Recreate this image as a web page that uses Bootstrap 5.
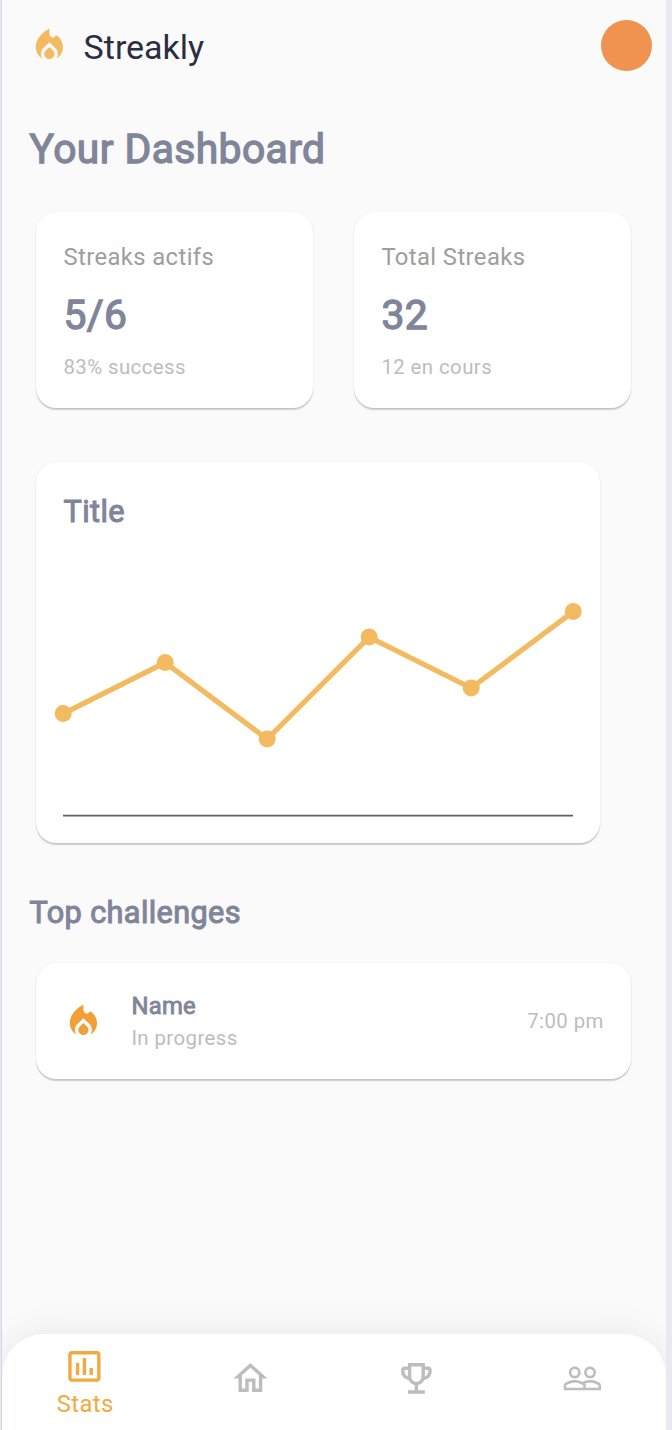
<!DOCTYPE html>
<html lang="en">
<head>
<meta charset="utf-8">
<meta name="viewport" content="width=device-width, initial-scale=1">
<title>Streakly</title>
<link href="https://cdn.jsdelivr.net/npm/bootstrap@5.3.0/dist/css/bootstrap.min.css" rel="stylesheet">
<style>
  body { background: #e7eaf3; font-family: Roboto, "Liberation Sans", sans-serif; overflow: hidden; }
  .phone { width: 665px; height: 1430px; margin-left: 1px; background: #fafafa; border-left: 1px solid #d2d4de; }
  .appbar { height: 91px; padding: 0 14.5px 0 27.4px; }
  .brand { font-size: 34px; line-height: 40px; color: #2b2d42; margin-left: 13.4px; padding-top: 3px; }
  .avatar { width: 51px; height: 51px; background: #f09351; }
  .ic { width: 40.8px; height: 40.8px; fill: currentColor; display: block; flex: none; }
  .strong-ink { color: #80859a; font-weight: 400; margin: 0; }
  .h-page { font-size: 40.8px; line-height: 48px; letter-spacing: .4px; -webkit-text-stroke: 1.3px #80859a; padding: 33.5px 0 0 27.6px; }
  .h-sect { font-size: 30.6px; line-height: 36px; letter-spacing: .4px; -webkit-text-stroke: 1.05px #80859a; }
  .h-name { font-size: 23.8px; line-height: 28px; letter-spacing: .3px; -webkit-text-stroke: .87px #80859a; }
  .tile { background: #fff; border: 0; border-radius: 20.4px; box-shadow: 0 1.2px 1.3px rgba(0,0,0,.17), 0 .9px 1.6px rgba(0,0,0,.07); }
  .stat { width: 277.4px; height: 196px; padding: 28px 27.4px 0; }
  .t-label { font-size: 23.8px; line-height: 34px; letter-spacing: .41px; color: #9e9e9e; }
  .t-sub { font-size: 20.4px; line-height: 27px; letter-spacing: .42px; color: #bdbdbd; }
  .stats { gap: 40.6px; margin: 39.5px 0 0 34px; }
  .num { font-size: 40.8px; line-height: 48px; letter-spacing: .4px; -webkit-text-stroke: 1.3px #80859a; margin: 17px 0 15px; }
  .chart-tile { width: 564.4px; height: 381px; margin: 54px 0 0 34px; padding-top: 32px; }
  .chart-tile .h-sect { padding-left: 27.6px; }
  .plot { display: block; width: 564px; height: 290px; }
  .top-title { padding: 52px 0 0 27.6px; }
  .challenge { height: 116px; margin: 32px 35px 0 34px; padding: 0 27.2px 0 27.4px; }
  .bottom-nav { height: 96.5px; background: #fff; border-radius: 42px 42px 0 0; color: #bdbdbd; box-shadow: 0 0 34px rgba(0,0,0,.08); clip-path: inset(-50px 0 0 0); padding-right: 1px; }
  .bottom-nav a { color: inherit; text-decoration: none; padding-top: 24.4px; }
  .bottom-nav a.active { color: #f4a940; padding-top: 12.4px; }
  .bottom-nav span { font-size: 23.8px; line-height: 34px; letter-spacing: .43px; padding-left: .6px; }
</style>
</head>
<body>
<div class="phone d-flex flex-column">
  <header class="appbar d-flex align-items-center">
    <svg class="ic" style="color:#f4ba60" viewBox="0 0 24 24"><path d="M12 12.9l-2.13 2.09C9.31 15.55 9 16.28 9 17.06 9 18.68 10.35 20 12 20s3-1.32 3-2.94c0-.78-.31-1.52-.87-2.07L12 12.9z"/><path d="M16 6l-.44.55C14.38 8.02 12 7.19 12 5.3V2S4 6 4 13c0 2.92 1.56 5.47 3.89 6.86-.56-.79-.89-1.76-.89-2.8 0-1.32.52-2.56 1.47-3.5L12 10.1l3.53 3.47c.95.93 1.47 2.17 1.47 3.5 0 1.02-.31 1.96-.85 2.75 1.89-1.15 3.29-3.06 3.71-5.3.66-3.55-1.07-6.9-3.86-8.52z"/></svg>
    <span class="brand">Streakly</span>
    <span class="avatar rounded-circle ms-auto"></span>
  </header>

  <h1 class="strong-ink h-page">Your Dashboard</h1>

  <section class="stats d-flex">
    <div class="tile stat">
      <div class="t-label">Streaks actifs</div>
      <div class="strong-ink num">5/6</div>
      <div class="t-sub">83% success</div>
    </div>
    <div class="tile stat">
      <div class="t-label">Total Streaks</div>
      <div class="strong-ink num">32</div>
      <div class="t-sub">12 en cours</div>
    </div>
  </section>

  <section class="tile chart-tile">
    <h2 class="strong-ink h-sect">Title</h2>
    <svg class="plot" viewBox="36 530 564 290">
      <path d="M63 815.6H573" stroke="#616161" stroke-width="1.7"/>
      <g fill="#f4ba60">
        <path d="M63.2 713.6L165.2 662.6L267.2 739.1L369.2 637.1L471.2 688.1L573.2 611.6" fill="none" stroke="#f4ba60" stroke-width="5.1"/>
        <circle cx="63.2" cy="713.6" r="8.5"/><circle cx="165.2" cy="662.6" r="8.5"/><circle cx="267.2" cy="739.1" r="8.5"/>
        <circle cx="369.2" cy="637.1" r="8.5"/><circle cx="471.2" cy="688.1" r="8.5"/><circle cx="573.2" cy="611.6" r="8.5"/>
      </g>
    </svg>
  </section>

  <h2 class="strong-ink h-sect top-title">Top challenges</h2>

  <article class="tile challenge d-flex align-items-center">
    <svg class="ic" style="color:#f29f38" viewBox="0 0 24 24"><path d="M12 12.9l-2.13 2.09C9.31 15.55 9 16.28 9 17.06 9 18.68 10.35 20 12 20s3-1.32 3-2.94c0-.78-.31-1.52-.87-2.07L12 12.9z"/><path d="M16 6l-.44.55C14.38 8.02 12 7.19 12 5.3V2S4 6 4 13c0 2.92 1.56 5.47 3.89 6.86-.56-.79-.89-1.76-.89-2.8 0-1.32.52-2.56 1.47-3.5L12 10.1l3.53 3.47c.95.93 1.47 2.17 1.47 3.5 0 1.02-.31 1.96-.85 2.75 1.89-1.15 3.29-3.06 3.71-5.3.66-3.55-1.07-6.9-3.86-8.52z"/></svg>
    <div style="margin-left:27.2px;padding-top:2px">
      <h3 class="strong-ink h-name">Name</h3>
      <div class="t-sub" style="padding-top:4.5px">In progress</div>
    </div>
    <span class="t-sub ms-auto" style="padding-top:1px">7:00 pm</span>
  </article>

  <nav class="bottom-nav d-flex mt-auto">
    <a href="#" class="active flex-fill w-25 d-flex flex-column align-items-center">
      <svg class="ic" viewBox="0 0 24 24"><path d="M9 17H7v-7h2v7zm4 0h-2V7h2v10zm4 0h-2v-4h2v4zm2.5 2.1h-15V5h15v14.1zm0-16.1h-15c-1.1 0-2 .9-2 2v14c0 1.1.9 2 2 2h15c1.1 0 2-.9 2-2V5c0-1.1-.9-2-2-2z"/></svg>
      <span>Stats</span>
    </a>
    <a href="#" class="flex-fill w-25 d-flex flex-column align-items-center" aria-label="Home">
      <svg class="ic" viewBox="0 0 24 24"><path d="M12 5.69l5 4.5V18h-2v-6H9v6H7v-7.81l5-4.5M12 3L2 12h3v8h6v-6h2v6h6v-8h3L12 3z"/></svg>
    </a>
    <a href="#" class="flex-fill w-25 d-flex flex-column align-items-center" aria-label="Trophies">
      <svg class="ic" viewBox="0 0 24 24"><path d="M19 5h-2V3H7v2H5c-1.1 0-2 .9-2 2v1c0 2.55 1.92 4.63 4.39 4.94.63 1.5 1.98 2.63 3.61 2.96V19H7v2h10v-2h-4v-3.1c1.63-.33 2.98-1.46 3.61-2.96C19.08 12.63 21 10.55 21 8V7c0-1.1-.9-2-2-2zM5 8V7h2v3.82C5.84 10.4 5 9.3 5 8zm7 6c-1.65 0-3-1.35-3-3V5h6v6c0 1.65-1.35 3-3 3zm7-6c0 1.3-.84 2.4-2 2.82V7h2v1z"/></svg>
    </a>
    <a href="#" class="flex-fill w-25 d-flex flex-column align-items-center" aria-label="Friends">
      <svg class="ic" viewBox="0 0 24 24"><path d="M16.5 13c-1.2 0-3.07.34-4.5 1-1.43-.67-3.3-1-4.5-1C5.33 13 1 14.08 1 16.25V19h22v-2.75c0-2.17-4.33-3.25-6.5-3.25zm-4 4.5h-10v-1.25c0-.54 2.56-1.75 5-1.75s5 1.21 5 1.75v1.25zm9 0H14v-1.25c0-.46-.2-.86-.52-1.22.88-.3 1.96-.53 3.02-.53 2.44 0 5 1.21 5 1.75v1.25zM7.5 12c1.93 0 3.5-1.57 3.5-3.5S9.43 5 7.5 5 4 6.57 4 8.5 5.57 12 7.5 12zm0-5.5c1.1 0 2 .9 2 2s-.9 2-2 2-2-.9-2-2 .9-2 2-2zm9 5.5c1.93 0 3.5-1.57 3.5-3.5S18.43 5 16.5 5 13 6.57 13 8.5s1.57 3.5 3.5 3.5zm0-5.5c1.1 0 2 .9 2 2s-.9 2-2 2-2-.9-2-2 .9-2 2-2z"/></svg>
    </a>
  </nav>
</div>
<script src="https://cdn.jsdelivr.net/npm/bootstrap@5.3.0/dist/js/bootstrap.bundle.min.js"></script>
</body>
</html>
